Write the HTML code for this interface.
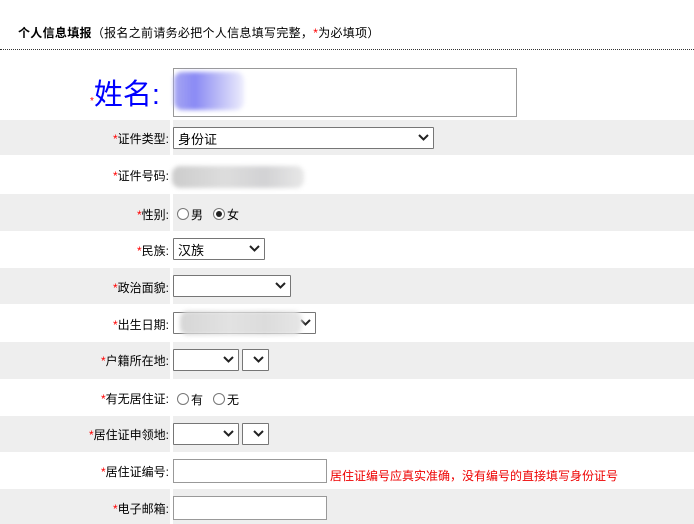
<!DOCTYPE html>
<html><head><meta charset="utf-8"><style>
body{margin:0;width:694px;height:524px;overflow:hidden;background:#fff;font-family:"Liberation Sans","Noto Sans CJK SC",sans-serif;font-size:12px;color:#000;position:relative}
.a{position:absolute}
.g{position:absolute;left:0;width:694px;background:#eeeeee}
.gap{position:absolute;left:170px;width:3px;background:#fff}
.lb{position:absolute;right:525px;text-align:right;white-space:nowrap;font-size:12px}
.lb i{font-style:normal;color:#f00}
.sel{position:absolute;border:1px solid #767676;background:#fff;box-sizing:border-box;border-radius:1px;font-size:13px}
.sel span{position:absolute;left:4px;top:1px}
.sel svg{position:absolute;right:4px;top:6px}
.inp{position:absolute;border:1px solid #999;background:#fff;box-sizing:border-box}
.rad{display:inline-block;width:12px;height:12px;border:1px solid #777;border-radius:50%;box-sizing:border-box;vertical-align:-1px;margin-right:2px;position:relative;background:#fff}
.blur{position:absolute;filter:blur(2px);border-radius:8px}
</style></head><body>
<div class="a" style="left:18px;top:24px;font-size:12px;letter-spacing:0.3px"><b>个人信息填报</b>（报名之前请务必把个人信息填写完整，<span style="color:#f00">*</span>为必填项）</div>
<div class="a" style="left:0;top:49px;width:694px;border-top:1px dotted #333"></div>

<div class="g" style="top:120px;height:35px"></div>
<div class="g" style="top:194px;height:37px"></div>
<div class="g" style="top:268px;height:36px"></div>
<div class="g" style="top:342px;height:37px"></div>
<div class="g" style="top:416px;height:36px"></div>
<div class="g" style="top:489px;height:35px"></div>
<div class="gap" style="top:120px;height:404px"></div>

<div class="a" style="left:90px;top:71px;font-size:29px;color:#00f;white-space:nowrap"><span style="color:#f00;font-size:10px">*</span>姓名:</div>
<div class="inp" style="left:173px;top:68px;width:344px;height:49px;border-color:#999"></div>
<div class="blur" style="left:174px;top:72px;width:70px;height:38px;background:linear-gradient(90deg,#a6a6f2,#8a8af5 30%,#b6b6f6 60%,#eeeefd)"></div>

<div class="lb" style="top:130px"><i>*</i>证件类型:</div>
<div class="sel" style="left:173px;top:127px;width:261px;height:22px"><span>身份证</span><svg width="11" height="8"><path d="M1 1l4.5 4.5L10 1" stroke="#222" stroke-width="2" fill="none"/></svg></div>

<div class="lb" style="top:167px"><i>*</i>证件号码:</div>
<div class="blur" style="left:172px;top:166px;width:132px;height:22px;background:linear-gradient(90deg,#ccc,#ddd 40%,#d2d2d4 70%,#e8e8e8)"></div>

<div class="lb" style="top:206px"><i>*</i>性别:</div>
<div class="a" style="left:177px;top:206px;font-size:12px"><span class="rad"></span>男&nbsp;&nbsp;&nbsp;<span class="rad"><span style="position:absolute;left:2px;top:2px;width:6px;height:6px;border-radius:50%;background:#222"></span></span>女</div>

<div class="lb" style="top:242px"><i>*</i>民族:</div>
<div class="sel" style="left:173px;top:238px;width:92px;height:22px"><span>汉族</span><svg width="11" height="8"><path d="M1 1l4.5 4.5L10 1" stroke="#222" stroke-width="2" fill="none"/></svg></div>

<div class="lb" style="top:279px"><i>*</i>政治面貌:</div>
<div class="sel" style="left:173px;top:275px;width:118px;height:22px"><svg width="11" height="8"><path d="M1 1l4.5 4.5L10 1" stroke="#222" stroke-width="2" fill="none"/></svg></div>

<div class="lb" style="top:316px"><i>*</i>出生日期:</div>
<div class="sel" style="left:173px;top:312px;width:143px;height:22px"><svg width="11" height="8"><path d="M1 1l4.5 4.5L10 1" stroke="#222" stroke-width="2" fill="none"/></svg></div>
<div class="blur" style="left:180px;top:311px;width:122px;height:24px;background:linear-gradient(90deg,#d6d6d6,#e2e2e2 40%,#dcdcdc 70%,#e6e6e6)"></div>

<div class="lb" style="top:352px"><i>*</i>户籍所在地:</div>
<div class="sel" style="left:173px;top:349px;width:66px;height:22px"><svg width="11" height="8"><path d="M1 1l4.5 4.5L10 1" stroke="#222" stroke-width="2" fill="none"/></svg></div>
<div class="sel" style="left:242px;top:349px;width:27px;height:22px"><svg width="11" height="8"><path d="M1 1l4.5 4.5L10 1" stroke="#222" stroke-width="2" fill="none"/></svg></div>

<div class="lb" style="top:390px"><i>*</i>有无居住证:</div>
<div class="a" style="left:177px;top:391px;font-size:12px"><span class="rad"></span>有&nbsp;&nbsp;&nbsp;<span class="rad"></span>无</div>

<div class="lb" style="top:426px"><i>*</i>居住证申领地:</div>
<div class="sel" style="left:173px;top:423px;width:66px;height:22px"><svg width="11" height="8"><path d="M1 1l4.5 4.5L10 1" stroke="#222" stroke-width="2" fill="none"/></svg></div>
<div class="sel" style="left:242px;top:423px;width:27px;height:22px"><svg width="11" height="8"><path d="M1 1l4.5 4.5L10 1" stroke="#222" stroke-width="2" fill="none"/></svg></div>

<div class="lb" style="top:463px"><i>*</i>居住证编号:</div>
<div class="inp" style="left:173px;top:459px;width:154px;height:24px"></div>
<div class="a" style="left:330px;top:467px;color:#e00;font-size:12px;white-space:nowrap">居住证编号应真实准确，没有编号的直接填写身份证号</div>

<div class="lb" style="top:500px"><i>*</i>电子邮箱:</div>
<div class="inp" style="left:173px;top:496px;width:154px;height:24px"></div>
</body></html>
